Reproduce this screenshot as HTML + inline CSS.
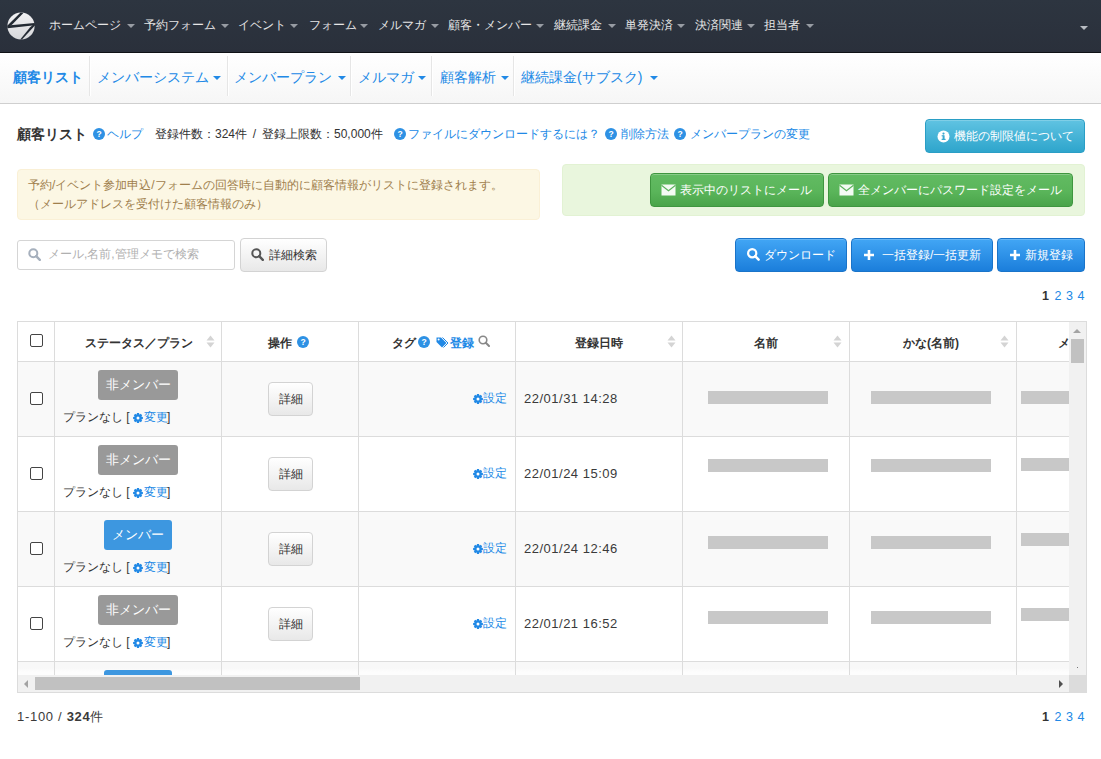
<!DOCTYPE html><html><head><meta charset="utf-8">
<style>
*{box-sizing:border-box;margin:0;padding:0}
html,body{width:1101px;height:759px;overflow:hidden;background:#fff}
body{position:relative;font-family:"Liberation Sans",sans-serif;color:#333;font-size:12px}
.a{position:absolute;white-space:nowrap;line-height:1}
#nav{position:absolute;left:0;top:0;width:1101px;height:53px;background:linear-gradient(#2d3540,#2a303b);border-bottom:1px solid #0f1216}
.ni{position:absolute;top:18px;font-size:12px;color:#e6e6e6;line-height:14px}
.car{position:absolute;width:0;height:0;border-left:4px solid transparent;border-right:4px solid transparent;border-top:4px solid #979ca3}
#sub{position:absolute;left:0;top:53px;width:1101px;height:51px;background:linear-gradient(#fff,#f6f6f6);border-bottom:1px solid #cfcfcf}
.si{position:absolute;top:16px;font-size:14px;color:#2189e6;line-height:16px}
.sep{position:absolute;top:3px;width:2px;height:40px;border-left:1px solid #e6e6e6;border-right:1px solid #fff}
.bcar{border-top-color:#2189e6}

.q{position:absolute;width:12px;height:12px;border-radius:50%;background:#2e91e4}
.q::after{content:"?";position:absolute;left:0;top:0;width:12px;text-align:center;font:bold 8.5px/12px "Liberation Sans",sans-serif;color:#fff}
.lk{font-size:12px;line-height:14px;color:#2189e6}
.btn{position:absolute;border-radius:4px}
.bt{font-size:12px;line-height:14px;color:#fff}
.info{background:linear-gradient(#60c3e2,#2ea5cc);border:1px solid #2a9ec5;box-shadow:inset 0 1px 0 rgba(255,255,255,.2)}
.succ{background:linear-gradient(#62bb62 0%,#5ab55a 55%,#4aa44a 100%);border:1px solid #3f963f;box-shadow:inset 0 1px 0 rgba(255,255,255,.25)}
.prim{background:linear-gradient(#42a6f5,#1b7edb);border:1px solid #1a74c9;box-shadow:inset 0 1px 0 rgba(255,255,255,.2)}
.def{background:linear-gradient(#fff,#e8e8e8);border:1px solid #d3d3d3}
.pg{font-size:12.5px;line-height:14px;color:#2189e6}
.pg b{color:#333}

.cb{position:absolute;width:13px;height:13px;border:1px solid #444;border-radius:2px;background:#fff}
.th{font-size:12px;line-height:14px;font-weight:bold;color:#333}
.td{font-size:12px;line-height:14px;color:#333}
.dt{font-size:13px;line-height:14px;color:#3a3a3a;letter-spacing:0.5px}
.bdg{height:30px;border-radius:3px;color:#fff;font-size:13px;line-height:30px;text-align:center}
.bar{height:13px;background:#c8c8c8}
</style></head><body>
<div id="nav">
  <svg class="a" style="left:7px;top:12px" width="28" height="28" viewBox="0 0 28 28">
    <defs><linearGradient id="lg" x1="0" y1="0" x2="0" y2="1"><stop offset="0" stop-color="#f2f2f4"></stop><stop offset="1" stop-color="#d6d7da"></stop></linearGradient></defs>
    <circle cx="14" cy="14" r="13.6" fill="url(#lg)"></circle>
    <path d="M13.6 0.6 L16.4 1.0 L5.2 12.4 L0.6 15.8 L0.5 13.6 Z" fill="#232a33"></path>
    <path d="M0.5 13.4 L27.7 11.1 L27.8 13.2 L0.6 16.2 Z" fill="#232a33"></path>
    <path d="M27.4 11.4 L27.9 13.6 L15.0 27.6 L13.2 27.5 L23.2 15.2 Z" fill="#232a33"></path>
  </svg>
  <span class="ni" style="left: 49px; width: 72px; text-align-last: justify; text-align: justify;">ホームページ</span><i class="car" style="left:127px;top:24px"></i>
  <span class="ni" style="left: 144px; width: 72px; text-align-last: justify; text-align: justify;">予約フォーム</span><i class="car" style="left:221px;top:24px"></i>
  <span class="ni" style="left: 238px; width: 48px; text-align-last: justify; text-align: justify;">イベント</span><i class="car" style="left:290px;top:24px"></i>
  <span class="ni" style="left: 309px; width: 48px; text-align-last: justify; text-align: justify;">フォーム</span><i class="car" style="left:360px;top:24px"></i>
  <span class="ni" style="left: 378px; width: 48px; text-align-last: justify; text-align: justify;">メルマガ</span><i class="car" style="left:431px;top:24px"></i>
  <span class="ni" style="left: 448px; width: 84px; text-align-last: justify; text-align: justify;">顧客・メンバー</span><i class="car" style="left:536px;top:24px"></i>
  <span class="ni" style="left: 554px; width: 48px; text-align-last: justify; text-align: justify;">継続課金</span><i class="car" style="left:608px;top:24px"></i>
  <span class="ni" style="left: 625px; width: 48px; text-align-last: justify; text-align: justify;">単発決済</span><i class="car" style="left:677px;top:24px"></i>
  <span class="ni" style="left: 695px; width: 48px; text-align-last: justify; text-align: justify;">決済関連</span><i class="car" style="left:747px;top:24px"></i>
  <span class="ni" style="left: 764px; width: 36px; text-align-last: justify; text-align: justify;">担当者</span><i class="car" style="left:806px;top:24px"></i>
  <i class="car" style="left:1080px;top:26px;border-top-color:#b8bcc2"></i>
</div>
<div id="sub">
  <span class="si" style="left: 13px; font-weight: bold; width: 70px; text-align-last: justify; text-align: justify;">顧客リスト</span>
  <i class="sep" style="left:89px"></i>
  <span class="si" style="left: 97px; width: 112px; text-align-last: justify; text-align: justify;">メンバーシステム</span><i class="car bcar" style="left:213px;top:23px"></i>
  <i class="sep" style="left:227px"></i>
  <span class="si" style="left: 234px; width: 98px; text-align-last: justify; text-align: justify;">メンバープラン</span><i class="car bcar" style="left:338px;top:23px"></i>
  <i class="sep" style="left:350px"></i>
  <span class="si" style="left: 358px; width: 56px; text-align-last: justify; text-align: justify;">メルマガ</span><i class="car bcar" style="left:418px;top:23px"></i>
  <i class="sep" style="left:431px"></i>
  <span class="si" style="left: 440px; width: 56px; text-align-last: justify; text-align: justify;">顧客解析</span><i class="car bcar" style="left:501px;top:23px"></i>
  <i class="sep" style="left:513px"></i>
  <span class="si" style="left: 521px; width: 121.33px; text-align-last: justify; text-align: justify;">継続課金(サブスク)</span><i class="car bcar" style="left:650px;top:23px"></i>
</div>

<!-- title row -->
<span class="a" style="left: 17px; top: 126px; font-size: 14px; font-weight: bold; color: rgb(51, 51, 51); line-height: 16px; width: 70px; text-align-last: justify; text-align: justify;">顧客リスト</span>
<i class="q" style="left:93px;top:128px"></i>
<span class="a lk" style="left: 107px; top: 127px; width: 36px; text-align-last: justify; text-align: justify;">ヘルプ</span>
<span class="a" style="left: 155px; top: 127px; font-size: 12px; line-height: 14px; color: rgb(51, 51, 51); word-spacing: 2.5px; width: 227.73px; text-align-last: justify; text-align: justify;">登録件数：324件 / 登録上限数：50,000件</span>
<i class="q" style="left:394px;top:128px"></i>
<span class="a lk" style="left: 408px; top: 127px; width: 192px; text-align-last: justify; text-align: justify;">ファイルにダウンロードするには？</span>
<i class="q" style="left:605px;top:128px"></i>
<span class="a lk" style="left: 621px; top: 127px; width: 48px; text-align-last: justify; text-align: justify;">削除方法</span>
<i class="q" style="left:674px;top:128px"></i>
<span class="a lk" style="left: 690px; top: 127px; width: 120px; text-align-last: justify; text-align: justify;">メンバープランの変更</span>

<div class="btn info" style="left:925px;top:119px;width:160px;height:34px">
  <svg class="a" style="left:11px;top:10px" width="13" height="13" viewBox="0 0 13 13"><circle cx="6.5" cy="6.5" r="6" fill="#fff"></circle><rect x="5.6" y="5.3" width="2" height="4.5" fill="#3aa9cf"></rect><rect x="4.6" y="8.8" width="4" height="1.2" fill="#3aa9cf"></rect><rect x="4.6" y="5.3" width="2" height="1" fill="#3aa9cf"></rect><circle cx="6.5" cy="3.6" r="1.1" fill="#3aa9cf"></circle></svg>
  <span class="a bt" style="left: 28px; top: 8.5px; width: 120px; text-align-last: justify; text-align: justify;">機能の制限値について</span>
</div>

<!-- alerts -->
<div class="a" style="left:17px;top:169px;width:523px;height:51px;background:#fcf7e4;border:1px solid #faf0d6;border-radius:4px"></div>
<span class="a" style="left: 28px; top: 178px; font-size: 12px; line-height: 14px; color: rgb(160, 128, 77); width: 474.67px; text-align-last: justify; text-align: justify;">予約/イベント参加申込/フォームの回答時に自動的に顧客情報がリストに登録されます。</span>
<span class="a" style="left: 28px; top: 197px; font-size: 12px; line-height: 14px; color: rgb(160, 128, 77); width: 240px; text-align-last: justify; text-align: justify;">（メールアドレスを受付けた顧客情報のみ）</span>

<div class="a" style="left:562px;top:164px;width:523px;height:52px;background:#e9f6dd;border:1px solid #e2f2d3;border-radius:4px"></div>
<div class="btn succ" style="left:650px;top:173px;width:174px;height:34px">
  <svg class="a" style="left:9.5px;top:10px" width="15" height="12" viewBox="0 0 15 12"><rect x="0.5" y="0.5" width="14" height="11" fill="#f4fbf4"></rect><path d="M0.5 1.2 L7.5 6.8 L14.5 1.2" stroke="#5cb25c" stroke-width="1.1" fill="none"></path></svg>
  <span class="a bt" style="left: 28.5px; top: 9px; width: 132px; text-align-last: justify; text-align: justify;">表示中のリストにメール</span>
</div>
<div class="btn succ" style="left:828px;top:173px;width:245px;height:34px">
  <svg class="a" style="left:9.5px;top:10px" width="15" height="12" viewBox="0 0 15 12"><rect x="0.5" y="0.5" width="14" height="11" fill="#f4fbf4"></rect><path d="M0.5 1.2 L7.5 6.8 L14.5 1.2" stroke="#5cb25c" stroke-width="1.1" fill="none"></path></svg>
  <span class="a bt" style="left: 28.5px; top: 9px; width: 204px; text-align-last: justify; text-align: justify;">全メンバーにパスワード設定をメール</span>
</div>

<!-- search -->
<div class="a" style="left:17px;top:240px;width:218px;height:30px;border:1px solid #d5d5d5;border-radius:3px;background:#fff"></div>
<svg class="a" style="left:28px;top:248px" width="13" height="13" viewBox="0 0 13 13"><circle cx="5.3" cy="5.3" r="4" stroke="#a6b0bd" stroke-width="2" fill="none"></circle><path d="M8.2 8.2 L11.8 11.8" stroke="#a6b0bd" stroke-width="2.4" stroke-linecap="round"></path></svg>
<span class="a" style="left: 48px; top: 247px; font-size: 12px; line-height: 14px; color: rgb(176, 176, 176); width: 150.67px; text-align-last: justify; text-align: justify;">メール,名前,管理メモで検索</span>
<div class="btn def" style="left:240px;top:238px;width:87px;height:34px">
  <svg class="a" style="left:10px;top:9px" width="13" height="13" viewBox="0 0 13 13"><circle cx="5.3" cy="5.3" r="4" stroke="#555" stroke-width="2" fill="none"></circle><path d="M8.2 8.2 L11.8 11.8" stroke="#555" stroke-width="2.4" stroke-linecap="round"></path></svg>
  <span class="a" style="left: 28px; top: 9px; font-size: 12px; line-height: 14px; color: rgb(51, 51, 51); width: 48px; text-align-last: justify; text-align: justify;">詳細検索</span>
</div>

<div class="btn prim" style="left:735px;top:238px;width:112px;height:34px">
  <svg class="a" style="left:11px;top:9px" width="13" height="13" viewBox="0 0 13 13"><circle cx="5.2" cy="5.2" r="4.1" stroke="#fff" stroke-width="2.2" fill="none"></circle><path d="M8.2 8.2 L11.6 11.6" stroke="#fff" stroke-width="2.5" stroke-linecap="round"></path></svg>
  <span class="a bt" style="left: 28px; top: 9px; width: 72px; text-align-last: justify; text-align: justify;">ダウンロード</span>
</div>
<div class="btn prim" style="left:851px;top:238px;width:142px;height:34px">
  <svg class="a" style="left:10.5px;top:10px" width="12" height="12" viewBox="0 0 12 12"><path d="M6 1 V11 M1 6 H11" stroke="#fff" stroke-width="2.6"></path></svg>
  <span class="a bt" style="left: 30px; top: 9px; width: 99.34px; text-align-last: justify; text-align: justify;">一括登録/一括更新</span>
</div>
<div class="btn prim" style="left:997px;top:238px;width:88px;height:34px">
  <svg class="a" style="left:10.5px;top:10px" width="12" height="12" viewBox="0 0 12 12"><path d="M6 1 V11 M1 6 H11" stroke="#fff" stroke-width="2.6"></path></svg>
  <span class="a bt" style="left: 26.5px; top: 9px; width: 48px; text-align-last: justify; text-align: justify;">新規登録</span>
</div>

<b class="a pg" style="left:1042px;top:289px;color:#333">1</b><span class="a pg" style="left:1054.5px;top:289px">2</span><span class="a pg" style="left:1066px;top:289px">3</span><span class="a pg" style="left:1077.5px;top:289px">4</span>
<div class="a" style="left:17px;top:321px;width:1070px;height:372px;border:1px solid #dcdcdc;background:#fff;overflow:hidden">
<div class="a" style="left:0;top:39px;width:1051px;height:75px;background:#f9f9f9;border-top:1px solid #dcdcdc"></div>
<div class="a" style="left:0;top:114px;width:1051px;height:75px;background:#fff;border-top:1px solid #dcdcdc"></div>
<div class="a" style="left:0;top:189px;width:1051px;height:75px;background:#f9f9f9;border-top:1px solid #dcdcdc"></div>
<div class="a" style="left:0;top:264px;width:1051px;height:75px;background:#fff;border-top:1px solid #dcdcdc"></div>
<div class="a" style="left:0;top:339px;width:1051px;height:75px;background:linear-gradient(#f8f8f8 0,#f8f8f8 6px,#fdfdfd 10px);border-top:1px solid #dcdcdc"></div>
<div class="a" style="left:36px;top:0;width:1px;height:353px;background:#dcdcdc"></div>
<div class="a" style="left:203px;top:0;width:1px;height:353px;background:#dcdcdc"></div>
<div class="a" style="left:340px;top:0;width:1px;height:353px;background:#dcdcdc"></div>
<div class="a" style="left:497px;top:0;width:1px;height:353px;background:#dcdcdc"></div>
<div class="a" style="left:664px;top:0;width:1px;height:353px;background:#dcdcdc"></div>
<div class="a" style="left:831px;top:0;width:1px;height:353px;background:#dcdcdc"></div>
<div class="a" style="left:998px;top:0;width:1px;height:353px;background:#dcdcdc"></div>
<i class="cb" style="left:12px;top:12px"></i>
<span class="a th" style="left: 67px; top: 14px; width: 108px; text-align-last: justify; text-align: justify;">ステータス／プラン</span>
<svg class="a" style="left:188px;top:13px" width="9" height="13" viewBox="0 0 9 13"><path d="M4.5 0.5 L8.5 5.5 H0.5 Z M4.5 12.5 L8.5 7.5 H0.5 Z" fill="#d4d4d4"></path></svg>
<span class="a th" style="left: 250px; top: 14px; width: 24px; text-align-last: justify; text-align: justify;">操作</span>
<i class="q" style="left:279px;top:14px"></i>
<span class="a th" style="left: 374px; top: 14px; width: 24px; text-align-last: justify; text-align: justify;">タグ</span>
<i class="q" style="left:400px;top:14px"></i>
<svg class="a" style="left:418px;top:15px" width="13" height="11" viewBox="0 0 13 11"><path d="M0.5 0.5 H5 L10.5 6 L6 10.5 L0.5 5 Z" fill="#2189e6"></path><circle cx="2.6" cy="2.6" r="1" fill="#fff"></circle><path d="M6.5 0.5 L12 6 L7.5 10.5" stroke="#2189e6" stroke-width="1" fill="none"></path></svg>
<span class="a th" style="left: 432px; top: 14px; color: rgb(33, 137, 230); width: 24px; text-align-last: justify; text-align: justify;">登録</span>
<svg class="a" style="left:460px;top:13px" width="12" height="12" viewBox="0 0 12 12"><circle cx="5" cy="5" r="3.8" stroke="#888" stroke-width="1.6" fill="none"></circle><path d="M7.8 7.8 L11 11" stroke="#888" stroke-width="2" stroke-linecap="round"></path></svg>
<span class="a th" style="left: 557px; top: 14px; width: 48px; text-align-last: justify; text-align: justify;">登録日時</span>
<svg class="a" style="left:649px;top:13px" width="9" height="13" viewBox="0 0 9 13"><path d="M4.5 0.5 L8.5 5.5 H0.5 Z M4.5 12.5 L8.5 7.5 H0.5 Z" fill="#d4d4d4"></path></svg>
<span class="a th" style="left: 736px; top: 14px; width: 24px; text-align-last: justify; text-align: justify;">名前</span>
<svg class="a" style="left:815px;top:13px" width="9" height="13" viewBox="0 0 9 13"><path d="M4.5 0.5 L8.5 5.5 H0.5 Z M4.5 12.5 L8.5 7.5 H0.5 Z" fill="#d4d4d4"></path></svg>
<span class="a th" style="left: 885px; top: 14px; width: 56px; text-align-last: justify; text-align: justify;">かな(名前)</span>
<svg class="a" style="left:982px;top:13px" width="9" height="13" viewBox="0 0 9 13"><path d="M4.5 0.5 L8.5 5.5 H0.5 Z M4.5 12.5 L8.5 7.5 H0.5 Z" fill="#d4d4d4"></path></svg>
<span class="a th" style="left: 1040px; top: 14px; width: 36px; text-align-last: justify; text-align: justify;">メール</span>
<i class="cb" style="left:12px;top:70px"></i>
<div class="a bdg" style="left:80px;top:48px;width:80px;background:#999">非メンバー</div>
<span class="a td" style="left: 45px; top: 88px; width: 66.67px; text-align-last: justify; text-align: justify;">プランなし [</span>
<svg class="a" style="left:115px;top:91px" width="10" height="10" viewBox="0 0 10 10"><path d="M9.88 3.91 L9.88 6.09 L8.73 6.15 L8.45 6.82 L9.22 7.68 L7.68 9.22 L6.82 8.45 L6.15 8.73 L6.09 9.88 L3.91 9.88 L3.85 8.73 L3.18 8.45 L2.32 9.22 L0.78 7.68 L1.55 6.82 L1.27 6.15 L0.12 6.09 L0.12 3.91 L1.27 3.85 L1.55 3.18 L0.78 2.32 L2.32 0.78 L3.18 1.55 L3.85 1.27 L3.91 0.12 L6.09 0.12 L6.15 1.27 L6.82 1.55 L7.68 0.78 L9.22 2.32 L8.45 3.18 L8.73 3.85 Z" fill="#2189e6"></path><circle cx="5" cy="5" r="1.5" fill="#fff"></circle></svg>
<span class="a td" style="left: 126px; top: 88px; color: rgb(33, 137, 230); width: 24px; text-align-last: justify; text-align: justify;">変更</span>
<span class="a td" style="left:149px;top:88px">]</span>
<div class="btn def" style="left:250px;top:60px;width:45px;height:34px"><span class="a td" style="left: 10px; top: 9px; width: 24px; text-align-last: justify; text-align: justify;">詳細</span></div>
<svg class="a" style="left:455px;top:72px" width="10" height="10" viewBox="0 0 10 10"><path d="M9.88 3.91 L9.88 6.09 L8.73 6.15 L8.45 6.82 L9.22 7.68 L7.68 9.22 L6.82 8.45 L6.15 8.73 L6.09 9.88 L3.91 9.88 L3.85 8.73 L3.18 8.45 L2.32 9.22 L0.78 7.68 L1.55 6.82 L1.27 6.15 L0.12 6.09 L0.12 3.91 L1.27 3.85 L1.55 3.18 L0.78 2.32 L2.32 0.78 L3.18 1.55 L3.85 1.27 L3.91 0.12 L6.09 0.12 L6.15 1.27 L6.82 1.55 L7.68 0.78 L9.22 2.32 L8.45 3.18 L8.73 3.85 Z" fill="#2189e6"></path><circle cx="5" cy="5" r="1.5" fill="#fff"></circle></svg>
<span class="a td" style="left: 465px; top: 69px; color: rgb(33, 137, 230); width: 24px; text-align-last: justify; text-align: justify;">設定</span>
<span class="a dt" style="left:506px;top:70px">22/01/31 14:28</span>
<div class="a bar" style="left:690px;top:69px;width:120px"></div>
<div class="a bar" style="left:853px;top:69px;width:120px"></div>
<div class="a bar" style="left:1003px;top:69px;width:60px"></div>
<i class="cb" style="left:12px;top:145px"></i>
<div class="a bdg" style="left:80px;top:123px;width:80px;background:#999">非メンバー</div>
<span class="a td" style="left: 45px; top: 163px; width: 66.67px; text-align-last: justify; text-align: justify;">プランなし [</span>
<svg class="a" style="left:115px;top:166px" width="10" height="10" viewBox="0 0 10 10"><path d="M9.88 3.91 L9.88 6.09 L8.73 6.15 L8.45 6.82 L9.22 7.68 L7.68 9.22 L6.82 8.45 L6.15 8.73 L6.09 9.88 L3.91 9.88 L3.85 8.73 L3.18 8.45 L2.32 9.22 L0.78 7.68 L1.55 6.82 L1.27 6.15 L0.12 6.09 L0.12 3.91 L1.27 3.85 L1.55 3.18 L0.78 2.32 L2.32 0.78 L3.18 1.55 L3.85 1.27 L3.91 0.12 L6.09 0.12 L6.15 1.27 L6.82 1.55 L7.68 0.78 L9.22 2.32 L8.45 3.18 L8.73 3.85 Z" fill="#2189e6"></path><circle cx="5" cy="5" r="1.5" fill="#fff"></circle></svg>
<span class="a td" style="left: 126px; top: 163px; color: rgb(33, 137, 230); width: 24px; text-align-last: justify; text-align: justify;">変更</span>
<span class="a td" style="left:149px;top:163px">]</span>
<div class="btn def" style="left:250px;top:135px;width:45px;height:34px"><span class="a td" style="left: 10px; top: 9px; width: 24px; text-align-last: justify; text-align: justify;">詳細</span></div>
<svg class="a" style="left:455px;top:147px" width="10" height="10" viewBox="0 0 10 10"><path d="M9.88 3.91 L9.88 6.09 L8.73 6.15 L8.45 6.82 L9.22 7.68 L7.68 9.22 L6.82 8.45 L6.15 8.73 L6.09 9.88 L3.91 9.88 L3.85 8.73 L3.18 8.45 L2.32 9.22 L0.78 7.68 L1.55 6.82 L1.27 6.15 L0.12 6.09 L0.12 3.91 L1.27 3.85 L1.55 3.18 L0.78 2.32 L2.32 0.78 L3.18 1.55 L3.85 1.27 L3.91 0.12 L6.09 0.12 L6.15 1.27 L6.82 1.55 L7.68 0.78 L9.22 2.32 L8.45 3.18 L8.73 3.85 Z" fill="#2189e6"></path><circle cx="5" cy="5" r="1.5" fill="#fff"></circle></svg>
<span class="a td" style="left: 465px; top: 144px; color: rgb(33, 137, 230); width: 24px; text-align-last: justify; text-align: justify;">設定</span>
<span class="a dt" style="left:506px;top:145px">22/01/24 15:09</span>
<div class="a bar" style="left:690px;top:137px;width:120px"></div>
<div class="a bar" style="left:853px;top:137px;width:120px"></div>
<div class="a bar" style="left:1003px;top:135.5px;width:60px"></div>
<i class="cb" style="left:12px;top:220px"></i>
<div class="a bdg" style="left:86px;top:198px;width:68px;background:#3d97e0">メンバー</div>
<span class="a td" style="left: 45px; top: 238px; width: 66.67px; text-align-last: justify; text-align: justify;">プランなし [</span>
<svg class="a" style="left:115px;top:241px" width="10" height="10" viewBox="0 0 10 10"><path d="M9.88 3.91 L9.88 6.09 L8.73 6.15 L8.45 6.82 L9.22 7.68 L7.68 9.22 L6.82 8.45 L6.15 8.73 L6.09 9.88 L3.91 9.88 L3.85 8.73 L3.18 8.45 L2.32 9.22 L0.78 7.68 L1.55 6.82 L1.27 6.15 L0.12 6.09 L0.12 3.91 L1.27 3.85 L1.55 3.18 L0.78 2.32 L2.32 0.78 L3.18 1.55 L3.85 1.27 L3.91 0.12 L6.09 0.12 L6.15 1.27 L6.82 1.55 L7.68 0.78 L9.22 2.32 L8.45 3.18 L8.73 3.85 Z" fill="#2189e6"></path><circle cx="5" cy="5" r="1.5" fill="#fff"></circle></svg>
<span class="a td" style="left: 126px; top: 238px; color: rgb(33, 137, 230); width: 24px; text-align-last: justify; text-align: justify;">変更</span>
<span class="a td" style="left:149px;top:238px">]</span>
<div class="btn def" style="left:250px;top:210px;width:45px;height:34px"><span class="a td" style="left: 10px; top: 9px; width: 24px; text-align-last: justify; text-align: justify;">詳細</span></div>
<svg class="a" style="left:455px;top:222px" width="10" height="10" viewBox="0 0 10 10"><path d="M9.88 3.91 L9.88 6.09 L8.73 6.15 L8.45 6.82 L9.22 7.68 L7.68 9.22 L6.82 8.45 L6.15 8.73 L6.09 9.88 L3.91 9.88 L3.85 8.73 L3.18 8.45 L2.32 9.22 L0.78 7.68 L1.55 6.82 L1.27 6.15 L0.12 6.09 L0.12 3.91 L1.27 3.85 L1.55 3.18 L0.78 2.32 L2.32 0.78 L3.18 1.55 L3.85 1.27 L3.91 0.12 L6.09 0.12 L6.15 1.27 L6.82 1.55 L7.68 0.78 L9.22 2.32 L8.45 3.18 L8.73 3.85 Z" fill="#2189e6"></path><circle cx="5" cy="5" r="1.5" fill="#fff"></circle></svg>
<span class="a td" style="left: 465px; top: 219px; color: rgb(33, 137, 230); width: 24px; text-align-last: justify; text-align: justify;">設定</span>
<span class="a dt" style="left:506px;top:220px">22/01/24 12:46</span>
<div class="a bar" style="left:690px;top:213.5px;width:120px"></div>
<div class="a bar" style="left:853px;top:213.5px;width:120px"></div>
<div class="a bar" style="left:1003px;top:210.5px;width:60px"></div>
<i class="cb" style="left:12px;top:295px"></i>
<div class="a bdg" style="left:80px;top:273px;width:80px;background:#999">非メンバー</div>
<span class="a td" style="left: 45px; top: 313px; width: 66.67px; text-align-last: justify; text-align: justify;">プランなし [</span>
<svg class="a" style="left:115px;top:316px" width="10" height="10" viewBox="0 0 10 10"><path d="M9.88 3.91 L9.88 6.09 L8.73 6.15 L8.45 6.82 L9.22 7.68 L7.68 9.22 L6.82 8.45 L6.15 8.73 L6.09 9.88 L3.91 9.88 L3.85 8.73 L3.18 8.45 L2.32 9.22 L0.78 7.68 L1.55 6.82 L1.27 6.15 L0.12 6.09 L0.12 3.91 L1.27 3.85 L1.55 3.18 L0.78 2.32 L2.32 0.78 L3.18 1.55 L3.85 1.27 L3.91 0.12 L6.09 0.12 L6.15 1.27 L6.82 1.55 L7.68 0.78 L9.22 2.32 L8.45 3.18 L8.73 3.85 Z" fill="#2189e6"></path><circle cx="5" cy="5" r="1.5" fill="#fff"></circle></svg>
<span class="a td" style="left: 126px; top: 313px; color: rgb(33, 137, 230); width: 24px; text-align-last: justify; text-align: justify;">変更</span>
<span class="a td" style="left:149px;top:313px">]</span>
<div class="btn def" style="left:250px;top:285px;width:45px;height:34px"><span class="a td" style="left: 10px; top: 9px; width: 24px; text-align-last: justify; text-align: justify;">詳細</span></div>
<svg class="a" style="left:455px;top:297px" width="10" height="10" viewBox="0 0 10 10"><path d="M9.88 3.91 L9.88 6.09 L8.73 6.15 L8.45 6.82 L9.22 7.68 L7.68 9.22 L6.82 8.45 L6.15 8.73 L6.09 9.88 L3.91 9.88 L3.85 8.73 L3.18 8.45 L2.32 9.22 L0.78 7.68 L1.55 6.82 L1.27 6.15 L0.12 6.09 L0.12 3.91 L1.27 3.85 L1.55 3.18 L0.78 2.32 L2.32 0.78 L3.18 1.55 L3.85 1.27 L3.91 0.12 L6.09 0.12 L6.15 1.27 L6.82 1.55 L7.68 0.78 L9.22 2.32 L8.45 3.18 L8.73 3.85 Z" fill="#2189e6"></path><circle cx="5" cy="5" r="1.5" fill="#fff"></circle></svg>
<span class="a td" style="left: 465px; top: 294px; color: rgb(33, 137, 230); width: 24px; text-align-last: justify; text-align: justify;">設定</span>
<span class="a dt" style="left:506px;top:295px">22/01/21 16:52</span>
<div class="a bar" style="left:690px;top:288.5px;width:120px"></div>
<div class="a bar" style="left:853px;top:288.5px;width:120px"></div>
<div class="a bar" style="left:1003px;top:285.5px;width:60px"></div>
<i class="cb" style="left:12px;top:370px"></i>
<div class="a bdg" style="left:86px;top:348px;width:68px;background:#3d97e0">メンバー</div>
<span class="a td" style="left: 45px; top: 388px; width: 66.67px; text-align-last: justify; text-align: justify;">プランなし [</span>
<svg class="a" style="left:115px;top:391px" width="10" height="10" viewBox="0 0 10 10"><path d="M9.88 3.91 L9.88 6.09 L8.73 6.15 L8.45 6.82 L9.22 7.68 L7.68 9.22 L6.82 8.45 L6.15 8.73 L6.09 9.88 L3.91 9.88 L3.85 8.73 L3.18 8.45 L2.32 9.22 L0.78 7.68 L1.55 6.82 L1.27 6.15 L0.12 6.09 L0.12 3.91 L1.27 3.85 L1.55 3.18 L0.78 2.32 L2.32 0.78 L3.18 1.55 L3.85 1.27 L3.91 0.12 L6.09 0.12 L6.15 1.27 L6.82 1.55 L7.68 0.78 L9.22 2.32 L8.45 3.18 L8.73 3.85 Z" fill="#2189e6"></path><circle cx="5" cy="5" r="1.5" fill="#fff"></circle></svg>
<span class="a td" style="left: 126px; top: 388px; color: rgb(33, 137, 230); width: 24px; text-align-last: justify; text-align: justify;">変更</span>
<span class="a td" style="left:149px;top:388px">]</span>
<div class="btn def" style="left:250px;top:360px;width:45px;height:34px"><span class="a td" style="left: 10px; top: 9px; width: 24px; text-align-last: justify; text-align: justify;">詳細</span></div>
<svg class="a" style="left:455px;top:372px" width="10" height="10" viewBox="0 0 10 10"><path d="M9.88 3.91 L9.88 6.09 L8.73 6.15 L8.45 6.82 L9.22 7.68 L7.68 9.22 L6.82 8.45 L6.15 8.73 L6.09 9.88 L3.91 9.88 L3.85 8.73 L3.18 8.45 L2.32 9.22 L0.78 7.68 L1.55 6.82 L1.27 6.15 L0.12 6.09 L0.12 3.91 L1.27 3.85 L1.55 3.18 L0.78 2.32 L2.32 0.78 L3.18 1.55 L3.85 1.27 L3.91 0.12 L6.09 0.12 L6.15 1.27 L6.82 1.55 L7.68 0.78 L9.22 2.32 L8.45 3.18 L8.73 3.85 Z" fill="#2189e6"></path><circle cx="5" cy="5" r="1.5" fill="#fff"></circle></svg>
<span class="a td" style="left: 465px; top: 369px; color: rgb(33, 137, 230); width: 24px; text-align-last: justify; text-align: justify;">設定</span>
<span class="a dt" style="left:506px;top:370px"></span>
<div class="a bar" style="left:690px;top:369px;width:120px"></div>
<div class="a bar" style="left:853px;top:369px;width:120px"></div>
<div class="a bar" style="left:1003px;top:369px;width:60px"></div>
<div class="a" style="left:1051px;top:0;width:17px;height:353px;background:#f1f1f1"></div>
<div class="a" style="left:1055px;top:7px;width:0;height:0;border-left:4px solid transparent;border-right:4px solid transparent;border-bottom:4px solid #a3a3a3"></div>
<div class="a" style="left:1053px;top:17px;width:13px;height:24px;background:#c1c1c1"></div>
<div class="a" style="left:0;top:353px;width:1051px;height:17px;background:#f1f1f1"></div>
<div class="a" style="left:6px;top:358px;width:0;height:0;border-top:4px solid transparent;border-bottom:4px solid transparent;border-right:4px solid #a3a3a3"></div>
<div class="a" style="left:17px;top:355px;width:325px;height:13px;background:#c1c1c1"></div>
<div class="a" style="left:1041px;top:358px;width:0;height:0;border-top:4px solid transparent;border-bottom:4px solid transparent;border-left:4px solid #505050"></div>
<div class="a" style="left:1051px;top:353px;width:17px;height:17px;background:#dcdcdc"></div><div class="a" style="left:1059px;top:345px;width:1px;height:1px;background:#777"></div>
</div>
<span class="a" style="left:17px;top:710px;font-size:13px;line-height:14px;color:#3a3a3a;letter-spacing:0.7px">1-100 / <b>324</b>件</span>
<b class="a pg" style="left:1042px;top:710px;color:#333">1</b><span class="a pg" style="left:1054.5px;top:710px">2</span><span class="a pg" style="left:1066px;top:710px">3</span><span class="a pg" style="left:1077.5px;top:710px">4</span>


</body></html>
